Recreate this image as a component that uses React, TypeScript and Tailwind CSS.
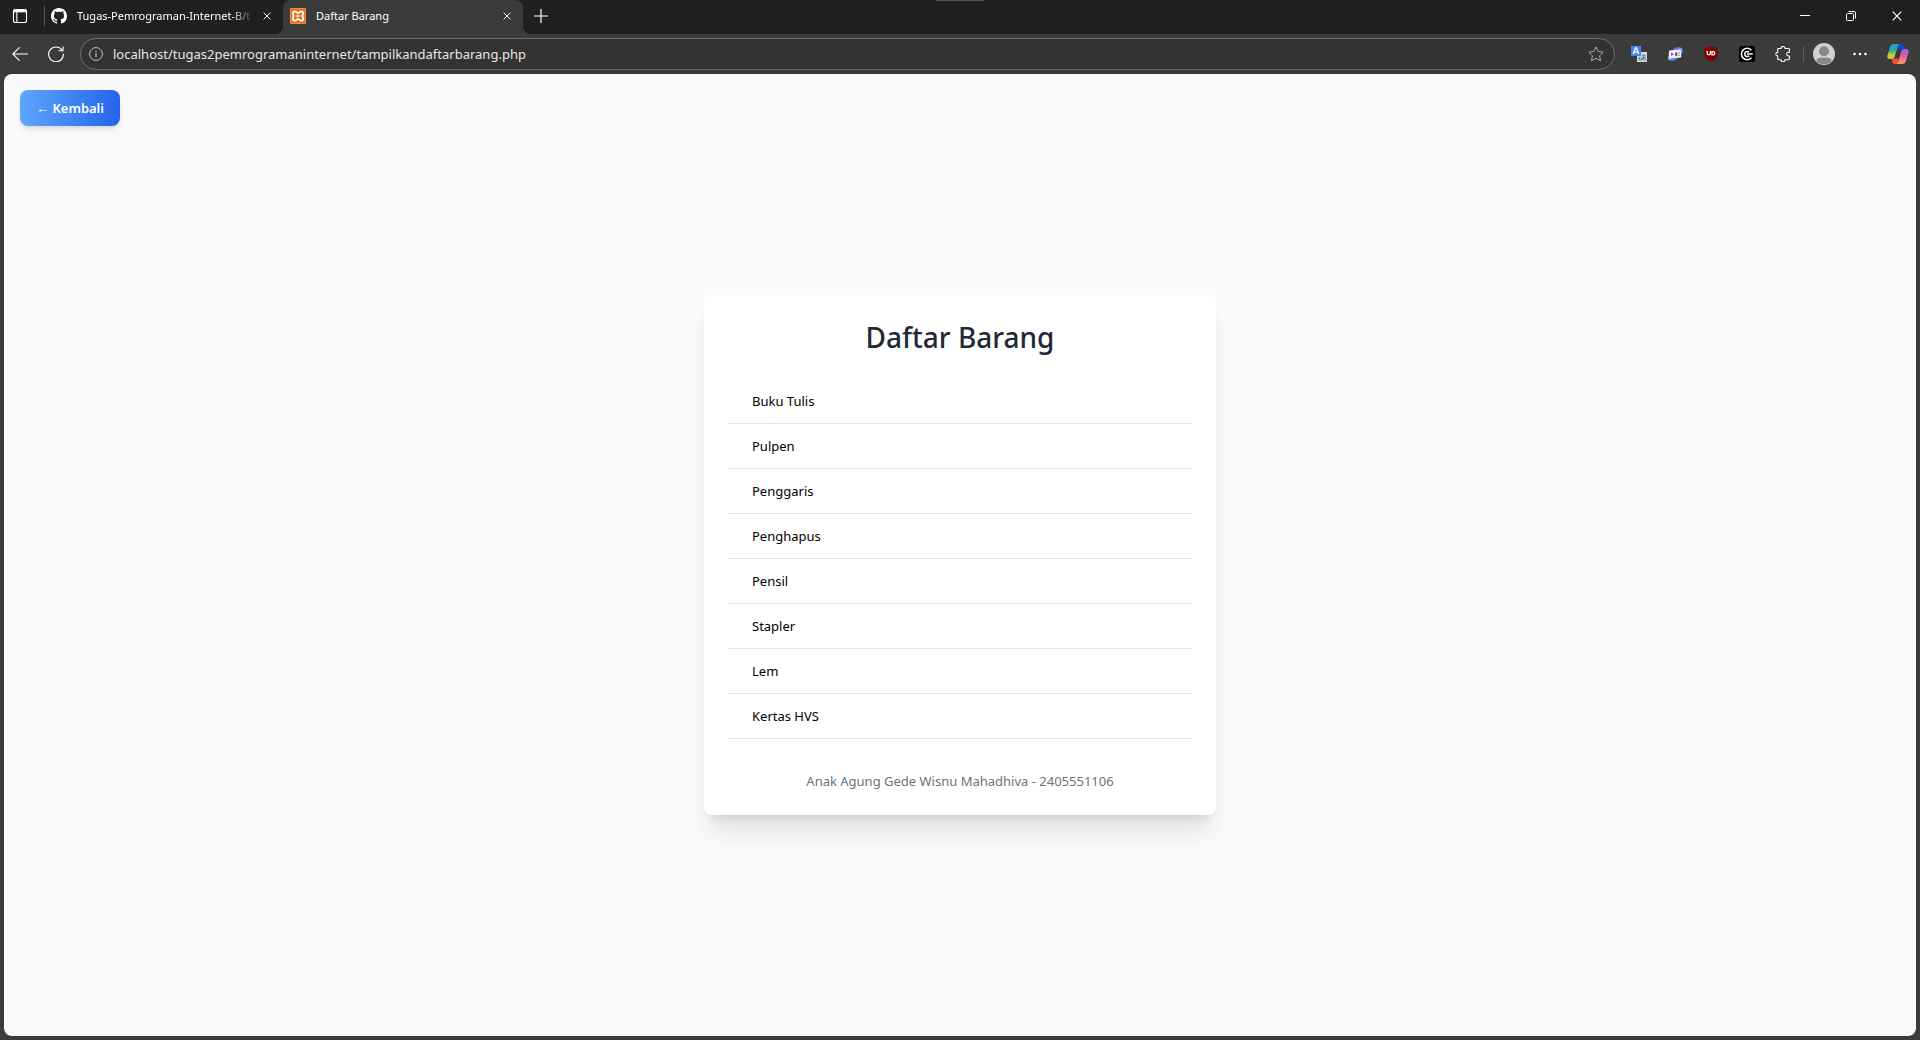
import { useId, type ReactNode } from "react";

const items = [
  "Buku Tulis",
  "Pulpen",
  "Penggaris",
  "Penghapus",
  "Pensil",
  "Stapler",
  "Lem",
  "Kertas HVS",
];

function CloseIcon({ className }: { className: string }) {
  return (
    <svg viewBox="0 0 10 10" className={className} fill="none" stroke="currentColor" strokeWidth="1.2">
      <path d="M.7.7l8.6 8.6M9.3.7L.7 9.3" />
    </svg>
  );
}

function GithubIcon() {
  return (
    <svg viewBox="0 0 16 16" className="size-4 shrink-0" fill="#fff">
      <path d="M8 0C3.58 0 0 3.58 0 8c0 3.54 2.29 6.53 5.47 7.59.4.07.55-.17.55-.38 0-.19-.01-.82-.01-1.49-2.01.37-2.53-.49-2.69-.94-.09-.23-.48-.94-.82-1.13-.28-.15-.68-.52-.01-.53.63-.01 1.08.58 1.23.82.72 1.21 1.87.87 2.33.66.07-.52.28-.87.51-1.07-1.78-.2-3.64-.89-3.64-3.95 0-.87.31-1.59.82-2.15-.08-.2-.36-1.02.08-2.12 0 0 .67-.21 2.2.82.64-.18 1.32-.27 2-.27s1.36.09 2 .27c1.53-1.04 2.2-.82 2.2-.82.44 1.1.16 1.92.08 2.12.51.56.82 1.27.82 2.15 0 3.07-1.87 3.75-3.65 3.95.29.25.54.73.54 1.48 0 1.07-.01 1.93-.01 2.2 0 .21.15.46.55.38A8.01 8.01 0 0 0 16 8c0-4.42-3.58-8-8-8z" />
    </svg>
  );
}

function XamppIcon() {
  return (
    <svg viewBox="0 0 16 16" className="size-4 shrink-0">
      <rect width="16" height="16" rx="1" fill="#f08a45" />
      <rect x="1" y="1" width="14" height="14" rx="1" fill="#ec6a1c" />
      <path
        d="M3 4.800C3 3.800 3.800 3.300 4.800 3.300c1.300 0 2 .900 3.200 2.200 1.200-1.300 1.900-2.200 3.200-2.200 1 0 1.800.500 1.800 1.500v1.400c0 .800-.300 1.300-.900 1.800.6.500.9 1 .9 1.800v1.400c0 1-.8 1.500-1.800 1.500-1.300 0-2-.9-3.200-2.200-1.200 1.300-1.900 2.200-3.200 2.200-1 0-1.800-.5-1.800-1.500V9.800c0-.8.3-1.300.9-1.800C3.300 7.500 3 7 3 6.200z"
        fill="#ec6a1c"
        stroke="#fff"
        strokeWidth="1.700"
        strokeLinejoin="round"
      />
      <path d="M6.200 8h3.600" stroke="#fff" strokeWidth="1.500" />
    </svg>
  );
}

function TabActionsIcon() {
  return (
    <svg viewBox="0 0 16 16" className="size-4" fill="none" stroke="#fff" strokeWidth="1.100">
      <rect x="1.500" y="1.500" width="13" height="13" rx="2" />
      <path d="M1.500 3h13" strokeWidth="2.600" />
      <path d="M4.800 4v10.500" />
    </svg>
  );
}

function BackIcon() {
  return (
    <svg viewBox="0 0 16 16" className="size-4" fill="none" stroke="#fff" strokeWidth="1.100">
      <path d="M16 8H.800M7.500 1.300L.800 8l6.700 6.700" />
    </svg>
  );
}

function ReloadIcon() {
  return (
    <svg viewBox="0 0 16 16" className="size-4" fill="none" stroke="#fff" strokeWidth="1.100" strokeLinecap="round">
      <path d="M14.200 4.300A7.400 7.400 0 1 0 15.400 8" />
      <path d="M15 .700v4h-4" />
    </svg>
  );
}

function InfoIcon() {
  return (
    <svg viewBox="0 0 14 14" className="size-3.5 shrink-0" fill="none" stroke="#c4c4c4">
      <circle cx="7" cy="7" r="6.400" />
      <path d="M7 6v4M7 4v1" strokeWidth="1.200" />
    </svg>
  );
}

function StarIcon() {
  return (
    <svg viewBox="0 0 16 16" className="size-4" fill="none" stroke="#a8a8a8" strokeLinejoin="round">
      <path d="M8 .900l2.200 4.600 5 .700-3.600 3.500.900 5L8 12.300l-4.500 2.400.900-5L.800 6.200l5-.700z" />
    </svg>
  );
}

function TranslateIcon() {
  return (
    <svg viewBox="0 0 16 16" className="size-4">
      <rect x="6" y="6" width="10" height="10" fill="#d9dcdf" />
      <path d="M0 0h10v10H0z" fill="#4285f4" />
      <path d="M2.200 8L4.500 2h.900l2.300 6M3 6.200h4" fill="none" stroke="#fff" strokeWidth="1.300" />
      <path
        d="M7.300 12.500h2.200M9.500 10.800c-1.700-.800-2.500 3.700-.500 3.700 1.200 0 1.500-1.200 1.500-2.500M11 9.300h3.700M12 8.300c0 2 0 4 .600 6M14.300 10.200c-.700 2.500-3.300 5-3.500 2.800-.100-2.200 4.200-2 4 .300-.100 1-.900 1.400-1.500 1.500"
        fill="none"
        stroke="#607d8b"
        strokeWidth="1"
      />
    </svg>
  );
}

function CardExtensionIcon() {
  const id = useId();
  return (
    <svg viewBox="0 0 16 16" className="size-4">
      <defs>
        <linearGradient id={id} x1="0" y1="1" x2="1" y2="0">
          <stop offset="0" stopColor="#37d5ff" />
          <stop offset=".5" stopColor="#8b2cf0" />
          <stop offset="1" stopColor="#4fc3ff" />
        </linearGradient>
      </defs>
      <path d="M6 4c0-1.800 1.500-2.500 3.500-2.500H13c1.500 0 2.500 1 2.500 2.500v3L10 13c-1 1-2 1.500-4 1.500H3.500C1.500 14.500.500 13 1 11z" fill={`url(#${id})`} />
      <path d="M2.500 5L13.500 4l.300 7L2.200 12z" fill="#f8f3ff" stroke="#f8f3ff" strokeLinejoin="round" />
      <path d="M4 6.600l2.900 1.600L4.200 10z" fill="#a020f0" />
      <path d="M8.600 6.800l1.300-.100v3L8.600 9.800zM11 7h1.800M11 9.200h1.800" fill="#555" stroke="#555" strokeWidth=".700" />
    </svg>
  );
}

function ShieldIcon() {
  return (
    <svg viewBox="0 0 16 16" className="size-4">
      <path d="M8 .200c2 1.300 4.300 1.600 6.800 1.600v5.400c0 4.500-3.300 7-6.800 8.600C4.500 14.200 1.200 11.700 1.200 7.200V1.800C3.700 1.800 6 1.500 8 .200z" fill="#800000" />
      <path d="M4.200 5v2.300c0 2 3.200 2 3.200 0V5M9 5.600h1.200a1.600 1.600 0 0 1 0 3.200H9z" fill="none" stroke="#fff" strokeWidth="1.300" />
    </svg>
  );
}

function CircleGIcon() {
  return (
    <svg viewBox="0 0 16 16" className="size-4">
      <rect width="16" height="16" rx="2.500" fill="#000" />
      <path d="M12.500 4.300A5.700 5.700 0 1 0 12.500 11.700" fill="none" stroke="#fff" strokeWidth="1.500" />
      <path d="M10.200 6.200A2.600 2.600 0 1 0 10.200 9.800M8 8h5.800" fill="none" stroke="#fff" strokeWidth="1.500" />
    </svg>
  );
}

function PuzzleIcon() {
  return (
    <svg viewBox="0 0 16 16" className="size-4" fill="none" stroke="#fff" strokeWidth="1.100" strokeLinejoin="round">
      <path d="M6 2.500a2 2 0 0 1 4 0h3.500A.900.900 0 0 1 14.400 3.400v2.800h-.900a1.900 1.900 0 0 0 0 3.800h.900v2.800a.900.900 0 0 1-.900.900H10a2 2 0 0 1-4 0H3.600a.900.900 0 0 1-.900-.900V10a1.900 1.900 0 0 1 0-3.800V3.400a.900.900 0 0 1 .900-.900z" />
    </svg>
  );
}

function AvatarIcon() {
  return (
    <svg viewBox="0 0 22 22" className="size-[22px]">
      <circle cx="11" cy="11" r="11" fill="#d2d0ce" />
      <circle cx="11" cy="8.300" r="5" fill="#8a8886" />
      <path d="M3.500 18c.300-2.200 1.500-3.200 3.500-3.200h8c2 0 3.200 1 3.500 3.200a10.300 10.300 0 0 1-15 0z" fill="#8a8886" />
    </svg>
  );
}

function CopilotIcon() {
  const id = useId();
  return (
    <svg viewBox="0 0 22 20" className="h-5 w-[22px]">
      <defs>
        <linearGradient id={`${id}a`} x1="0" y1="0" x2="0" y2="1">
          <stop offset="0" stopColor="#1e9bea" />
          <stop offset=".45" stopColor="#2fb08a" />
          <stop offset=".75" stopColor="#c2cf3b" />
          <stop offset="1" stopColor="#f5b51f" />
        </linearGradient>
        <linearGradient id={`${id}b`} x1="0" y1="0" x2="0" y2="1">
          <stop offset="0" stopColor="#9a5cf0" />
          <stop offset=".5" stopColor="#ee5c9c" />
          <stop offset="1" stopColor="#ff9a52" />
        </linearGradient>
      </defs>
      <path d="M10 0h4.500c1.200 0 1.700.700 2.100 2l1 3.500H11z" fill="#1747c9" />
      <path d="M12 20H7.500c-1.200 0-1.700-.700-2.100-2l-1-3.500H11z" fill="#f0503c" />
      <path d="M6.500 0H13c-1.200 0-1.700 1-2.200 2.500L7.700 12.500C7.200 14 6.500 15 5 15H2.500C.500 15 0 13.200.500 11.300L3 3C3.600 1 4.700 0 6.500 0z" fill={`url(#${id}a)`} />
      <path d="M15.500 20H9c1.200 0 1.700-1 2.200-2.500l3.100-10C14.800 6 15.500 5 17 5h2.500c2 0 2.500 1.800 2 3.700L19 17c-.600 2-1.700 3-3.500 3z" fill={`url(#${id}b)`} />
    </svg>
  );
}

function ToolButton({ label, children }: { label: string; children: ReactNode }) {
  return (
    <button aria-label={label} className="flex h-8 w-9 shrink-0 items-center justify-center">
      {children}
    </button>
  );
}

function WindowButton({ label, children }: { label: string; children: ReactNode }) {
  return (
    <button aria-label={label} className="flex h-full w-[46px] items-center justify-center">
      {children}
    </button>
  );
}

function TabStrip() {
  return (
    <header className="relative flex h-[34px] items-stretch bg-[#202020] pb-0.5">
      <div className="absolute top-0 left-1/2 h-px w-12 -translate-x-1/2 bg-[#555]" />
      <button aria-label="Menu tindakan tab" className="flex w-10 items-center justify-center">
        <TabActionsIcon />
      </button>
      <div className="ml-1 h-5 w-px self-center bg-[#5a5a5a]" />
      <div className="flex w-[238px] items-center pr-2 pl-1.5">
        <GithubIcon />
        <button className="ml-2.5 flex-1 text-left whitespace-nowrap [mask-image:linear-gradient(to_right,#000_86%,transparent)]">
          Tugas-Pemrograman-Internet-B/t
        </button>
        <button aria-label="Tutup tab" className="ml-1 flex size-4 items-center justify-center">
          <CloseIcon className="size-2" />
        </button>
      </div>
      <div className="relative -mb-0.5 flex w-60 items-center rounded-t-lg bg-[#3b3b3b] pr-2 pb-0.5 pl-[7px]">
        <div className="absolute bottom-0 -left-2 size-2 bg-[radial-gradient(circle_at_0_0,#202020_8px,#3b3b3b_8px)]" />
        <div className="absolute -right-2 bottom-0 size-2 bg-[radial-gradient(circle_at_100%_0,#202020_8px,#3b3b3b_8px)]" />
        <XamppIcon />
        <button className="ml-2.5 flex-1 text-left">Daftar Barang</button>
        <button aria-label="Tutup tab" className="flex size-4 items-center justify-center">
          <CloseIcon className="size-2" />
        </button>
      </div>
      <button aria-label="Tab baru" className="flex w-9 items-center justify-center">
        <svg viewBox="0 0 14 14" className="size-3.5" stroke="#fff" strokeWidth="1.200">
          <path d="M7 0v14M0 7h14" />
        </svg>
      </button>
      <div className="ml-auto flex">
        <WindowButton label="Minimalkan">
          <svg viewBox="0 0 10 10" className="size-2.5" stroke="#fff">
            <path d="M0 4.500h10" />
          </svg>
        </WindowButton>
        <WindowButton label="Pulihkan">
          <svg viewBox="0 0 10 10" className="size-2.5" fill="none" stroke="#fff">
            <rect x=".5" y="2.500" width="7" height="7" rx="1" />
            <path d="M2.500.500H8A1.500 1.500 0 0 1 9.500 2v5.500" />
          </svg>
        </WindowButton>
        <WindowButton label="Tutup">
          <CloseIcon className="size-2.5" />
        </WindowButton>
      </div>
    </header>
  );
}

function Toolbar() {
  return (
    <nav className="flex h-10 items-center px-0.5">
      <ToolButton label="Kembali"><BackIcon /></ToolButton>
      <ToolButton label="Segarkan"><ReloadIcon /></ToolButton>
      <div className="mx-1.5 flex h-8 flex-1 items-center rounded-full border border-[#6b6b6b] bg-[#333] pl-2">
        <InfoIcon />
        <input
          aria-label="Alamat"
          defaultValue="localhost/tugas2pemrogramaninternet/tampilkandaftarbarang.php"
          className="ml-2.5 h-full min-w-0 flex-1 bg-transparent text-[13px] text-[#e6e6e6] outline-none"
        />
        <ToolButton label="Tambahkan ke favorit"><StarIcon /></ToolButton>
      </div>
      <ToolButton label="Terjemahan"><TranslateIcon /></ToolButton>
      <ToolButton label="Ekstensi kartu"><CardExtensionIcon /></ToolButton>
      <ToolButton label="Pemblokir iklan"><ShieldIcon /></ToolButton>
      <ToolButton label="Ekstensi G"><CircleGIcon /></ToolButton>
      <ToolButton label="Ekstensi"><PuzzleIcon /></ToolButton>
      <div className="mx-0.5 h-4 w-px shrink-0 bg-[#5e5e5e]" />
      <ToolButton label="Profil"><AvatarIcon /></ToolButton>
      <ToolButton label="Pengaturan lainnya">
        <svg viewBox="0 0 14 4" className="h-1 w-3.5" fill="#fff">
          <circle cx="1.500" cy="2" r="1.300" />
          <circle cx="7" cy="2" r="1.300" />
          <circle cx="12.500" cy="2" r="1.300" />
        </svg>
      </ToolButton>
      <div className="mx-0.5"><ToolButton label="Copilot"><CopilotIcon /></ToolButton></div>
    </nav>
  );
}

export default function App() {
  return (
    <div className="flex min-h-screen flex-col bg-[#3b3b3b] font-['Noto_Sans',sans-serif] text-[11px] text-white">
      <TabStrip />
      <Toolbar />
      <main className="relative mx-1 mb-1 flex flex-1 items-center justify-center rounded-lg bg-slate-50 text-[13px] leading-5">
        <a
          href="#kembali"
          className="absolute top-4 left-4 rounded-lg bg-linear-to-r from-[#60a5fa] to-[#2563eb] px-4 py-2 font-semibold text-white shadow-md"
        >
          ← Kembali
        </a>
        <section className="w-full max-w-lg rounded-lg bg-white p-6 shadow-xl">
          <h1 className="mb-6 text-center text-[28px] leading-9 font-medium text-[#1f2937]">Daftar Barang</h1>
          <ul className="text-black">
            {items.map((item) => (
              <li key={item} className="border-b border-[#e5e7eb] px-6 py-3">{item}</li>
            ))}
          </ul>
          <p className="mt-8 text-center text-[#6b7280]">Anak Agung Gede Wisnu Mahadhiva - 2405551106</p>
        </section>
      </main>
    </div>
  );
}
